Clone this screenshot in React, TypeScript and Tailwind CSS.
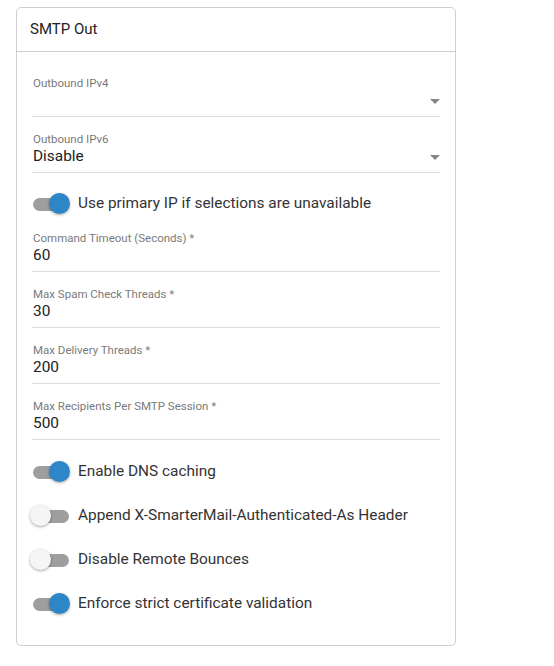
import React from "react";

function Toggle({ on }: { on: boolean }) {
  return (
    <div className="relative w-[40px] h-[24px] shrink-0">
      <div className="absolute left-[1px] top-[6px] w-[36px] h-[13px] rounded-full bg-[#9e9e9e]" />
      {on ? (
        <div className="absolute left-[17px] top-[1px] w-[21px] h-[21px] rounded-full bg-[#2d86c8] shadow-[0_1px_3px_rgba(0,0,0,0.35)]" />
      ) : (
        <div className="absolute left-[-2px] top-[1px] w-[21px] h-[21px] rounded-full bg-[#f5f5f5] shadow-[0_1px_3px_rgba(0,0,0,0.35)]" />
      )}
    </div>
  );
}

function ToggleRow({ on, label, className = "" }: { on: boolean; label: string; className?: string }) {
  return (
    <div className={`flex items-center h-[24px] ${className}`}>
      <Toggle on={on} />
      <span className="ml-[6px] text-[15.4px] text-[#333]">{label}</span>
    </div>
  );
}

function Arrow() {
  return (
    <svg width="10" height="5" viewBox="0 0 10 5" className="absolute right-[0px] top-[8px]">
      <polygon points="0,0 10,0 5,5" fill="#858585" />
    </svg>
  );
}

function Field({ label, value, select, className = "" }: { label: string; value?: string; select?: boolean; className?: string }) {
  return (
    <div className={`border-b border-[#dcdcdc] pb-[6px] ${className}`}>
      <div className="text-[11.5px] leading-[16px] text-[#7a7a7a] pl-[1px]">{label}</div>
      <div className="relative h-[19px] text-[15.4px] leading-[18px] text-[#222] pl-[1px]">
        {value}
        {select && <Arrow />}
      </div>
    </div>
  );
}

export default function App() {
  return (
    <div className="w-[554px] h-[666px] bg-white pt-[7px] pl-[16px]" style={{ fontFamily: "Roboto, 'Liberation Sans', sans-serif" }}>
      <div className="w-[440px] h-[639px] border border-[#cfcfcf] rounded-[5px]">
        <div className="h-[44px] border-b border-[#cfcfcf] flex items-center pl-[13px] text-[15px] text-[#222]">SMTP Out</div>
        <div className="pl-[15px] pr-[15px] pt-[23px]">
          <Field label="Outbound IPv4" value="" select />
          <Field label="Outbound IPv6" value="Disable" select className="mt-[14px]" />
          <ToggleRow on label="Use primary IP if selections are unavailable" className="mt-[19px]" />
          <Field label="Command Timeout (Seconds) *" value="60" className="mt-[14px]" />
          <Field label="Max Spam Check Threads *" value="30" className="mt-[14px]" />
          <Field label="Max Delivery Threads *" value="200" className="mt-[14px]" />
          <Field label="Max Recipients Per SMTP Session *" value="500" className="mt-[14px]" />
          <ToggleRow on label="Enable DNS caching" className="mt-[20px]" />
          <ToggleRow on={false} label="Append X-SmarterMail-Authenticated-As Header" className="mt-[20px]" />
          <ToggleRow on={false} label="Disable Remote Bounces" className="mt-[20px]" />
          <ToggleRow on label="Enforce strict certificate validation" className="mt-[20px]" />
        </div>
      </div>
    </div>
  );
}
